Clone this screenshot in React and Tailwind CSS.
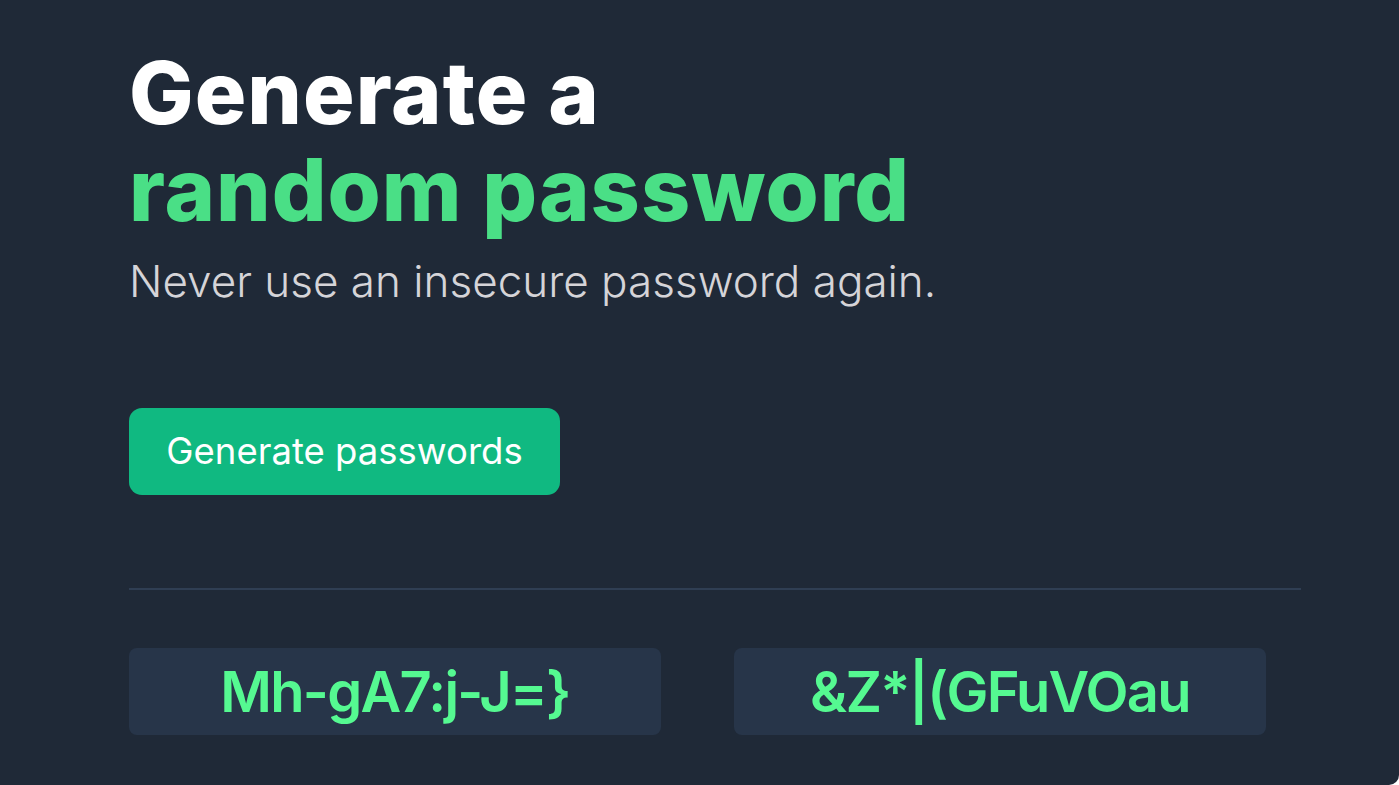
export default function App() {
  const passwords = ['Mh-gA7:j-J=}', '&Z*|(GFuVOau']

  return (
    <div className="min-h-screen bg-white font-['Inter',sans-serif]">
      <div className="h-[785px] w-full bg-[#1f2937] rounded-br-[10px] pl-[129px] pt-[45px] overflow-hidden">
        <h1 className="text-[86px] leading-[97px] font-extrabold tracking-[1px] text-white">
          Generate a
          <br />
          <span className="text-[#4adf86]">random password</span>
        </h1>
        <p className="mt-[16px] text-[44px] leading-[52px] font-light text-[#d5d4d8]">
          Never use an insecure password again.
        </p>

        <button className="mt-[101px] h-[87px] w-[431px] rounded-[13px] bg-[#10b981] text-white text-[36.5px] flex items-center justify-center">
          Generate passwords
        </button>

        <div className="mt-[93px] w-[1172px] h-[2px] bg-[#2f3e53]" />

        {/* Password output */}
        <div className="mt-[58px] flex gap-[73px]">
          {passwords.map(p => (
            <div key={p} className="w-[532px] h-[87px] rounded-[8px] bg-[#273549] flex items-center justify-center text-[56px] font-semibold tracking-[-1.7px] text-[#55f991]">
              {p}
            </div>
          ))}
        </div>
      </div>
    </div>
  )
}
